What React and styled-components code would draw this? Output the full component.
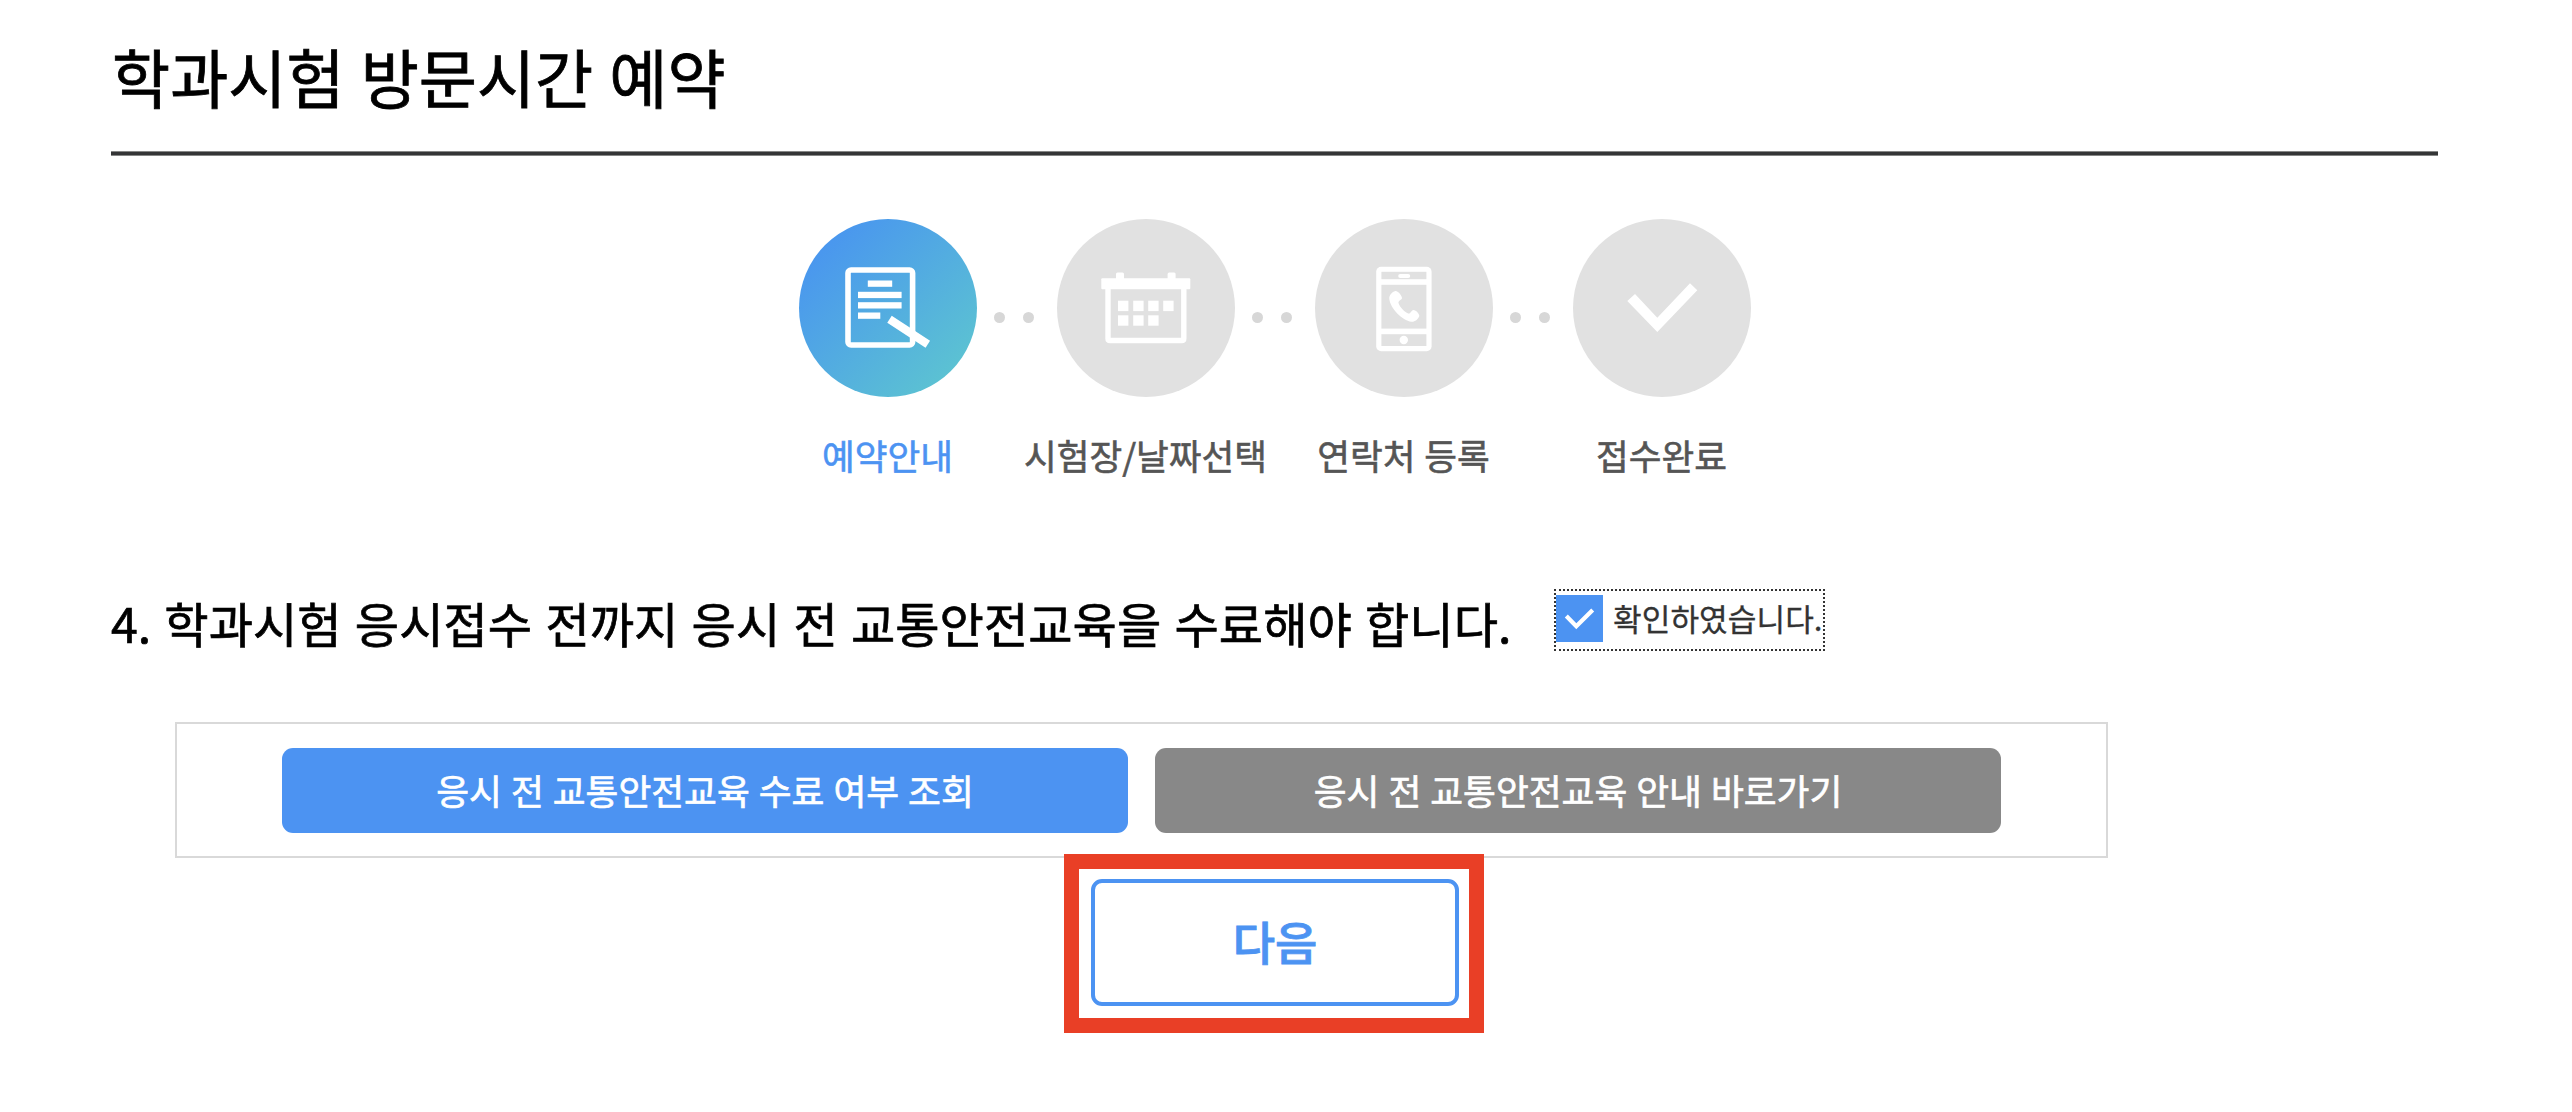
import React, { useState } from "react";
import styled, { createGlobalStyle } from "styled-components";

const steps = [
  { name: "예약안내", Icon: GuideIcon },
  { name: "시험장/날짜선택", Icon: CalendarIcon },
  { name: "연락처 등록", Icon: PhoneIcon },
  { name: "접수완료", Icon: DoneIcon },
];

export default function App() {
  const [currentStep] = useState(0);
  const [checked, setChecked] = useState(true);

  return (
    <Container>
      <GlobalStyle />
      <Title>학과시험 방문시간 예약</Title>
      <TitleLine />

      {/* 예약 단계 */}
      <StepList>
        {steps.map(({ name, Icon }, index) => (
          <React.Fragment key={name}>
            {index > 0 && (
              <Dots>
                <Dot />
                <Dot />
              </Dots>
            )}
            <Step>
              <StepCircle $active={index === currentStep}>
                <Icon />
              </StepCircle>
              <StepName $active={index === currentStep}>{name}</StepName>
            </Step>
          </React.Fragment>
        ))}
      </StepList>

      {/* 안내 확인 */}
      <Notice>
        <NoticeText>
          4. 학과시험 응시접수 전까지 응시 전 교통안전교육을 수료해야 합니다.
        </NoticeText>
        <ConfirmLabel onClick={() => setChecked((prev) => !prev)}>
          <CheckBox $checked={checked}>
            {checked && (
              <svg width="47" height="47" viewBox="0 0 47 47" fill="none">
                <path d="M10.3 21 20.3 31.3 36.7 15" stroke="#fff" strokeWidth="4.2" />
              </svg>
            )}
          </CheckBox>
          <ConfirmText>확인하였습니다.</ConfirmText>
        </ConfirmLabel>
      </Notice>

      <LinkBox>
        <LinkButton $color="#4c93f2">응시 전 교통안전교육 수료 여부 조회</LinkButton>
        <LinkButton $color="#888888">응시 전 교통안전교육 안내 바로가기</LinkButton>
      </LinkBox>

      {/* 하단 버튼 */}
      <Highlight>
        <NextButton>다음</NextButton>
      </Highlight>
    </Container>
  );
}

function GuideIcon() {
  return (
    <svg width="178" height="178" viewBox="0 0 178 178" fill="#fff">
      <rect x="49" y="51" width="64.6" height="75" rx="3" fill="none" stroke="#fff" strokeWidth="5.6" />
      <rect x="68.8" y="61.5" width="24.4" height="6.3" />
      <rect x="59" y="72.8" width="43.6" height="6.3" />
      <rect x="59" y="83.2" width="43.6" height="6.3" />
      <rect x="59" y="93.5" width="22.3" height="6.3" />
      <path d="M90.5 100.2 128.8 125.2" stroke="#fff" strokeWidth="8.2" />
    </svg>
  );
}

function CalendarIcon() {
  return (
    <svg width="178" height="178" viewBox="0 0 178 178" fill="#fff">
      <rect x="44.3" y="59.3" width="89" height="11" rx="1" />
      <rect x="59" y="53.5" width="8" height="8" rx="1.5" />
      <rect x="110.6" y="53.5" width="8" height="8" rx="1.5" />
      <path
        d="M51 68V119.5Q51 121.5 53 121.5H124.8Q126.8 121.5 126.8 119.5V68"
        fill="none"
        stroke="#fff"
        strokeWidth="5.4"
      />
      {[61, 76.2, 91.2, 106.2].map((x) => (
        <rect key={x} x={x} y="81.7" width="10.4" height="10.4" />
      ))}
      {[61, 76.2, 91.2].map((x) => (
        <rect key={x} x={x} y="96.3" width="10.4" height="10.4" />
      ))}
    </svg>
  );
}

function PhoneIcon() {
  return (
    <svg width="178" height="178" viewBox="0 0 178 178" fill="#fff">
      <rect x="61.2" y="47.8" width="55.4" height="84.4" rx="5" />
      <g fill="#e1e1e1">
        <rect x="66.4" y="52.8" width="45" height="7.4" />
        <rect x="66.4" y="65.8" width="45" height="43.8" />
        <rect x="66.4" y="115.2" width="45" height="11.8" />
      </g>
      <rect x="83.2" y="55" width="12" height="4" rx="2" />
      <circle cx="88.8" cy="121" r="4.2" />
      <path d="M80.3 72C82.5 71.5 87 76.5 87 79C87 81 83 81.5 83.5 84C85 88.5 90 93.5 93.5 94.6C95.5 95 96.5 91 98.5 91C101 91 104.5 95 104.3 97C103 100.5 100 103 96.5 102.8C87 101.5 75.5 89.5 74.3 80C74 76 77 73 80.3 72Z" />
    </svg>
  );
}

function DoneIcon() {
  return (
    <svg width="178" height="178" viewBox="0 0 178 178" fill="#fff">
      <path d="M54.3 82 62 75 84.3 98.7 117 64.3 124.3 71.3 84.3 113Z" />
    </svg>
  );
}

// 스타일링
const GlobalStyle = createGlobalStyle`
  * {
    box-sizing: border-box;
  }

  body {
    margin: 0;
    background: #fff;
    color: #000;
    font-family: "Noto Sans CJK KR", sans-serif;
    font-weight: 400;
  }
`;

const Container = styled.div`
  min-height: 1112px;
  padding: 28px 134px 0 111px;
  overflow: hidden;
`;

const Title = styled.h1`
  margin: 0 0 27px;
  padding-left: 1px;
  font-size: 63.2px;
  font-weight: 400;
  line-height: 96px;
  word-spacing: 2px;
  -webkit-text-stroke: 0.8px;
`;

const TitleLine = styled.div`
  height: 5px;
  background: linear-gradient(#858685 1px, #343536 1px 4px, #858685 4px);
`;

const StepList = styled.div`
  display: flex;
  justify-content: center;
  margin-top: 63px;
  padding-left: 1px;
`;

const Step = styled.div`
  display: flex;
  flex-direction: column;
  align-items: center;
  width: 178px;
`;

const StepCircle = styled.div`
  width: 178px;
  height: 178px;
  border-radius: 50%;
  overflow: hidden;
  background: ${(props) =>
    props.$active ? "linear-gradient(135deg, #468ef4 0%, #5fcacd 100%)" : "#e1e1e1"};

  svg {
    display: block;
  }
`;

const StepName = styled.div`
  margin-top: 32px;
  padding-right: 1px;
  font-size: 35.6px;
  line-height: 51px;
  word-spacing: 1px;
  white-space: nowrap;
  color: ${(props) => (props.$active ? "#4c93f2" : "#555")};
  -webkit-text-stroke: 0.6px;
`;

const Dots = styled.div`
  display: flex;
  gap: 18.5px;
  width: 80px;
  padding: 93px 0 0 16.5px;
`;

const Dot = styled.span`
  width: 11px;
  height: 11px;
  border-radius: 50%;
  background: #d7d7d7;
`;

const Notice = styled.div`
  display: flex;
  align-items: flex-start;
  margin-top: 109px;
`;

const NoticeText = styled.p`
  flex: 0 0 1443px;
  margin: 0;
  font-size: 48.2px;
  line-height: 66px;
  word-spacing: 2.4px;
  white-space: nowrap;
  -webkit-text-stroke: 0.7px;
`;

const ConfirmLabel = styled.div`
  display: flex;
  width: 271px;
  height: 62px;
  padding-top: 4px;
  border: 2px dotted #333;
  cursor: pointer;
`;

const CheckBox = styled.span`
  flex: none;
  width: 47px;
  height: 47px;
  background: ${(props) => (props.$checked ? "#4c93f2" : "#fff")};

  svg {
    display: block;
  }
`;

const ConfirmText = styled.span`
  margin-left: 10px;
  font-size: 31.2px;
  line-height: 46px;
  white-space: nowrap;
  color: #333;
  -webkit-text-stroke: 0.3px;
`;

const LinkBox = styled.div`
  display: flex;
  align-items: center;
  justify-content: center;
  gap: 27px;
  width: 1933px;
  height: 136px;
  margin: 67px 0 0 64px;
  border: 2px solid #d9d9d9;
`;

const LinkButton = styled.button`
  width: 846px;
  height: 85px;
  padding: 0 0 2px;
  border: none;
  border-radius: 11px;
  background: ${(props) => props.$color};
  color: #fff;
  font-family: inherit;
  font-size: 35.7px;
  font-weight: 400;
  word-spacing: 1px;
  -webkit-text-stroke: 0.7px;
  cursor: pointer;
`;

const Highlight = styled.div`
  position: relative;
  width: 420px;
  height: 179px;
  margin: -4px 0 0 953px;
  padding: 10px 10px 12px 12px;
  border: 15px solid #e93f26;
`;

const NextButton = styled.button`
  width: 368px;
  height: 127px;
  padding: 0 0 5px;
  border: 4px solid #4c93f2;
  border-radius: 11px;
  background: #fff;
  color: #4c93f2;
  font-family: inherit;
  font-size: 46px;
  font-weight: 500;
  -webkit-text-stroke: 0.8px;
  cursor: pointer;
`;
